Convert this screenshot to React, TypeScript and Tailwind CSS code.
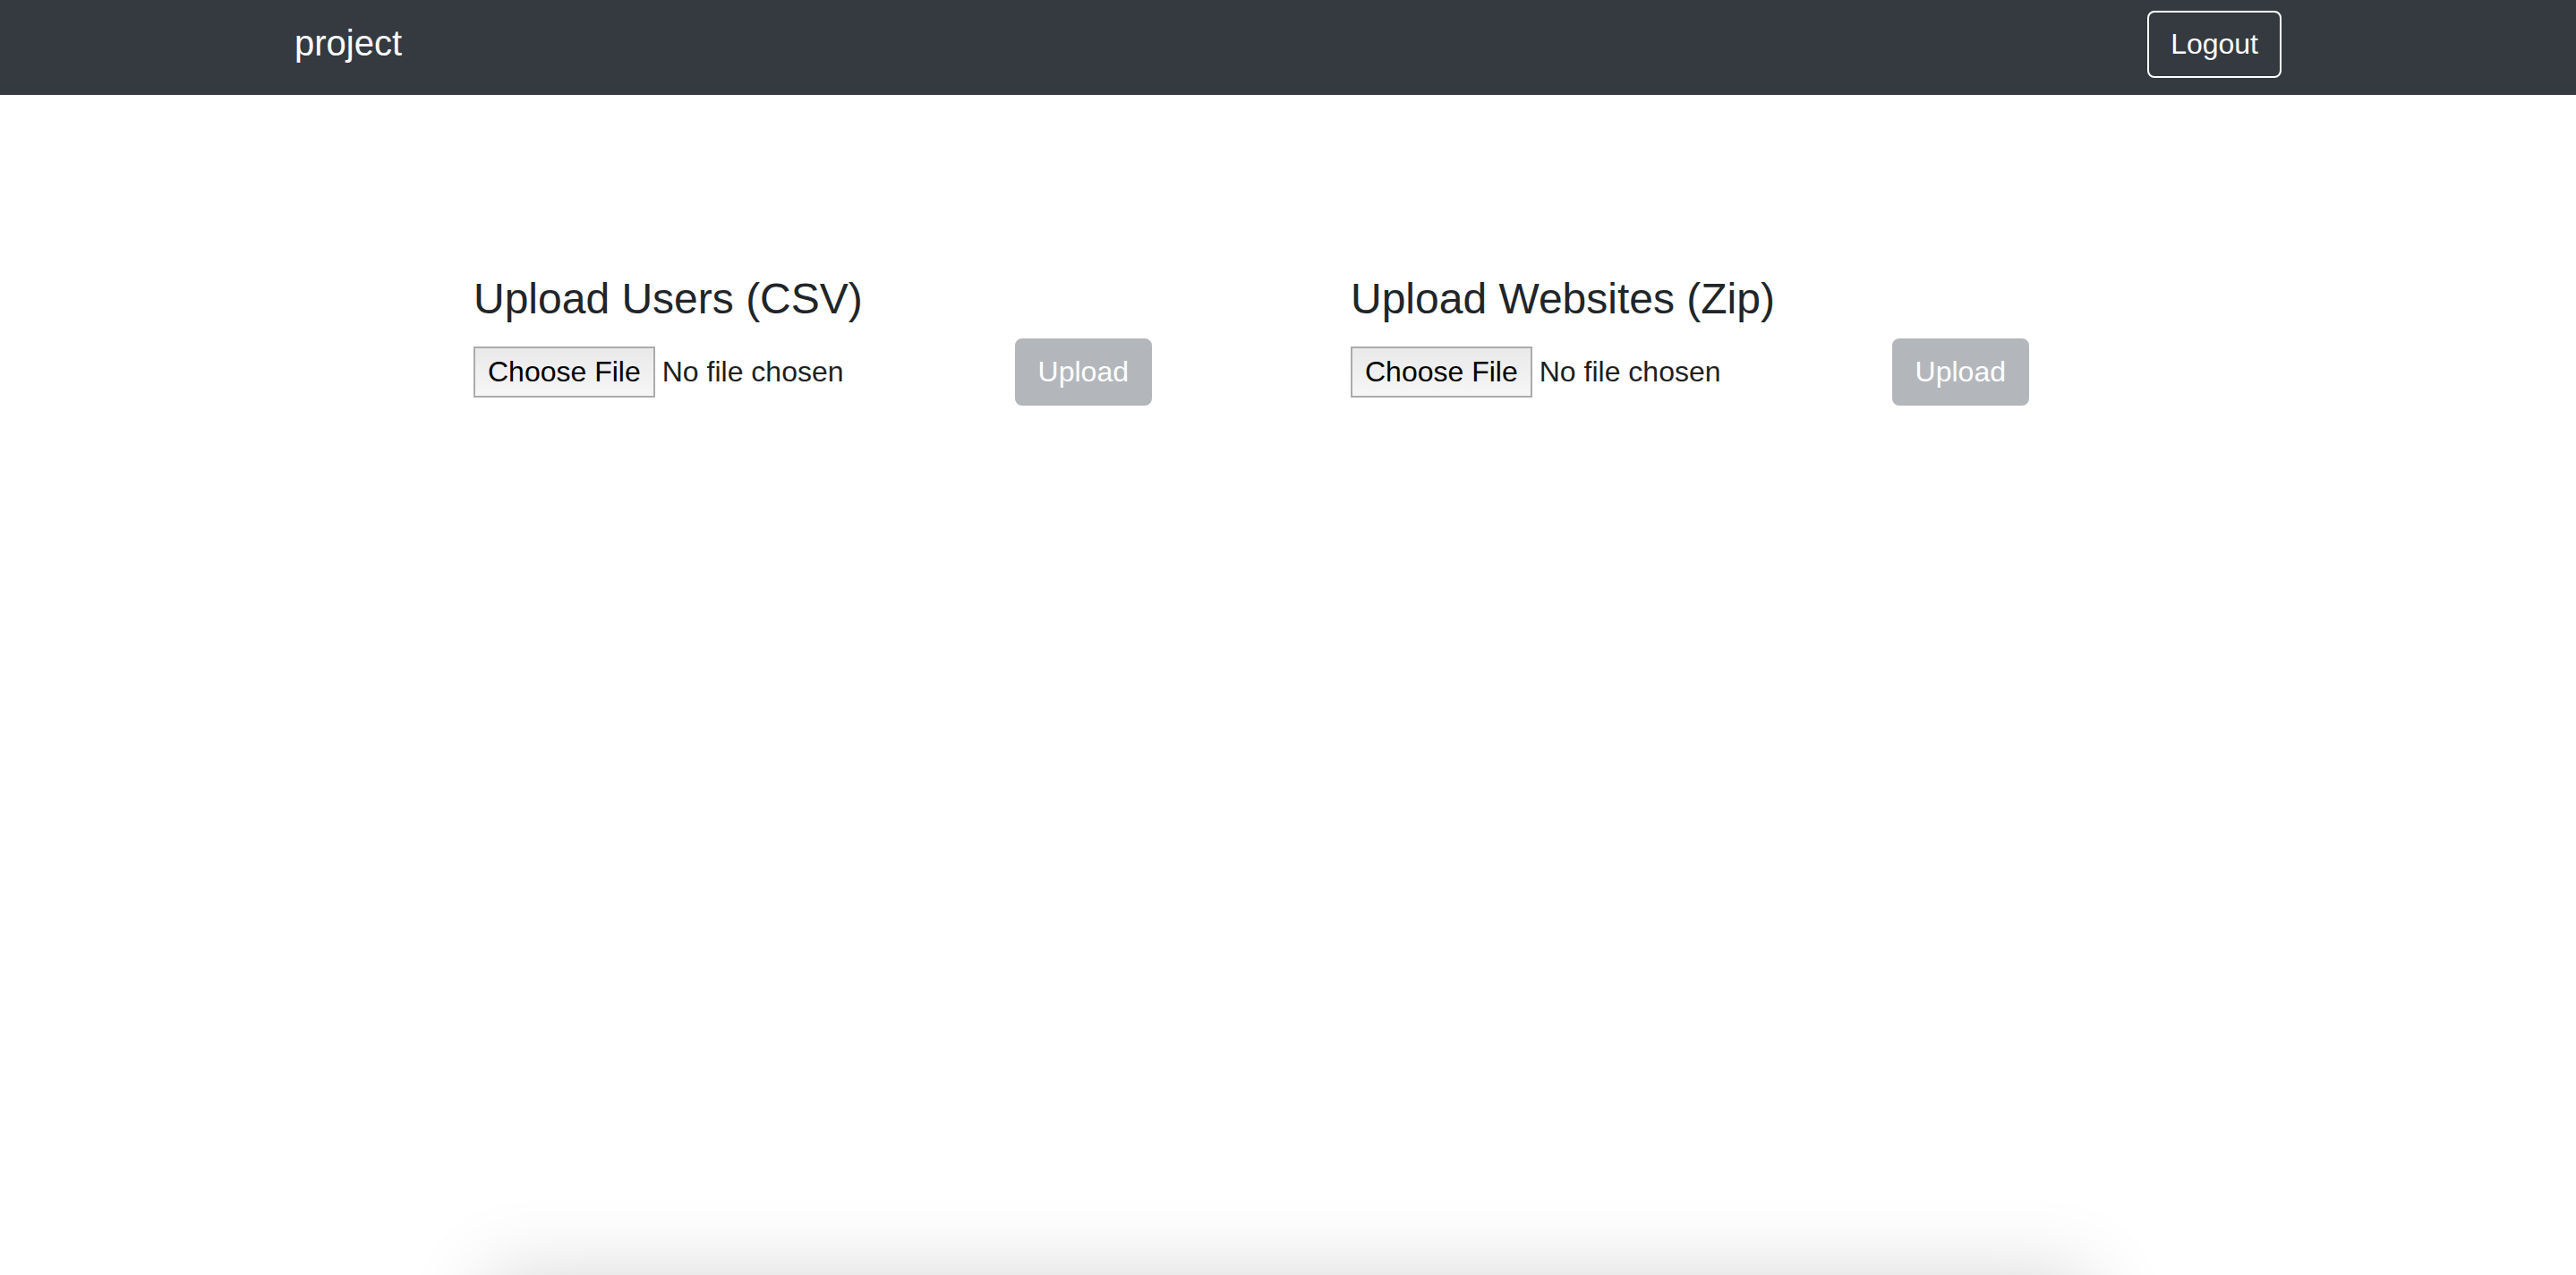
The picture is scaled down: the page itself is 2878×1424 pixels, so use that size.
import React from 'react';

const font = { fontFamily: '"Liberation Sans", Arial, Helvetica, sans-serif' };

const UploadBox: React.FC<{ title: string }> = ({ title }) => (
  <div className="flex flex-col">
    <h3 className="text-[48px] leading-[57.6px] text-[#212529] font-normal mb-[15px]">{title}</h3>
    <div className="flex items-center justify-between">
      <div className="flex items-center">
        {/* file input look-alike */}
        <span className="border-2 border-[#ababab] bg-gradient-to-b from-[#e9e9e9] to-[#f6f6f6] px-[14px] py-[8px] text-[32px] leading-[37px] text-black">
          Choose File
        </span>
        <span className="ml-2 text-[32px] leading-[37px] text-[#1f1f1f]">No file chosen</span>
      </div>
      <button
        disabled
        className="rounded-lg border-2 border-[#b3b7bb] bg-[#b3b7bb] px-6 py-3 text-[32px] leading-[47px] text-white"
      >
        Upload
      </button>
    </div>
  </div>
);

export default function App() {
  return (
    <div style={font} className="h-screen overflow-hidden bg-white flex flex-col">
      {/* Navbar */}
      <nav className="bg-[#343a40] h-[106px] shrink-0">
        <div className="mx-auto w-[2280px] px-[30px] pt-3 flex items-start justify-between">
          <a className="mt-[6px] text-[40px] leading-[60px] text-white">project</a>
          <button className="rounded-lg border-2 border-white px-6 py-3 text-[32px] leading-[47px] text-white">
            Logout
          </button>
        </div>
      </nav>

      {/* Uploads */}
      <main className="flex-1">
        <div className="mx-auto w-[2280px] px-[30px]">
          <div className="pl-[200px] pt-[199px] grid grid-cols-[758px_758px] gap-x-[222px]">
            <UploadBox title="Upload Users (CSV)" />
            <UploadBox title="Upload Websites (Zip)" />
          </div>
        </div>
      </main>

      {/* bottom panel just below the fold, only its shadow shows */}
      <div className="shrink-0 mx-auto w-[1790px] h-[150px] -mb-[150px] bg-white shadow-[0_0_90px_rgba(0,0,0,0.16)]" />
    </div>
  );
}
